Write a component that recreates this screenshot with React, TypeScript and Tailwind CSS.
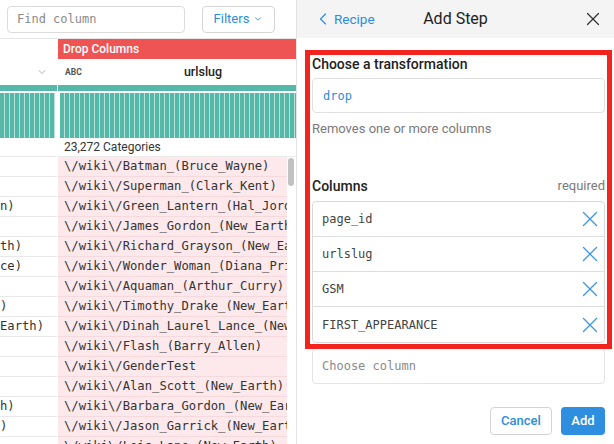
import { ChevronDown, ChevronLeft, X } from "lucide-react";

const rows = [
  { left: "", value: "\\/wiki\\/Batman_(Bruce_Wayne)" },
  { left: "", value: "\\/wiki\\/Superman_(Clark_Kent)" },
  { left: "n)", value: "\\/wiki\\/Green_Lantern_(Hal_Jordan)" },
  { left: "", value: "\\/wiki\\/James_Gordon_(New_Earth)" },
  { left: "th)", value: "\\/wiki\\/Richard_Grayson_(New_Earth)" },
  { left: "ce)", value: "\\/wiki\\/Wonder_Woman_(Diana_Prince)" },
  { left: "", value: "\\/wiki\\/Aquaman_(Arthur_Curry)" },
  { left: ")", value: "\\/wiki\\/Timothy_Drake_(New_Earth)" },
  { left: "Earth)", value: "\\/wiki\\/Dinah_Laurel_Lance_(New_Earth)" },
  { left: "", value: "\\/wiki\\/Flash_(Barry_Allen)" },
  { left: "", value: "\\/wiki\\/GenderTest" },
  { left: "", value: "\\/wiki\\/Alan_Scott_(New_Earth)" },
  { left: "h)", value: "\\/wiki\\/Barbara_Gordon_(New_Earth)" },
  { left: ")", value: "\\/wiki\\/Jason_Garrick_(New_Earth)" },
  { left: "", value: "\\/wiki\\/Lois_Lane_(New_Earth)" },
];

const chosen = ["page_id", "urlslug", "GSM", "FIRST_APPEARANCE"];

const mono = "font-['DejaVu_Sans_Mono',monospace]";

function Bars({ count }: { count: number }) {
  return (
    <div className="flex h-full gap-px overflow-hidden bg-[#b6e2da]">
      {Array.from({ length: count }).map((_, i) => (
        <div key={i} className="h-full w-[4px] shrink-0 bg-[#56b8a8]" />
      ))}
    </div>
  );
}

function DataPanel() {
  return (
    <div className="flex w-[296px] shrink-0 flex-col overflow-hidden">
      <div className="flex h-[39px] shrink-0 items-center border-b border-[#e6e6e6] pl-[7px]">
        <div
          className={`flex h-[27px] w-[178px] items-center rounded border border-[#dcdcdc] pl-[9px] text-[12px] text-[#8a8a8a] ${mono}`}
        >
          Find column
        </div>
        <button
          type="button"
          className="ml-[17px] flex h-[27px] w-[73px] items-center justify-center gap-[4px] rounded border border-[#d6d6d6] text-[13px] text-[#2b8de0]"
        >
          Filters
          <ChevronDown size={10} strokeWidth={2} />
        </button>
      </div>

      <div className="grid grid-cols-[57px_238px] gap-x-px">
        <div className="h-[20px]" />
        <div className="flex h-[20px] items-center bg-[#ef5455] pl-[5px] text-[12px] font-medium text-white">
          Drop Columns
        </div>

        <div className="flex h-[26px] items-center justify-end pr-[9px] text-[#9a9a9a]">
          <ChevronDown size={12} strokeWidth={1.5} />
        </div>
        <div className="relative flex h-[26px] items-center justify-center pl-[52px]">
          <span className="absolute left-[7px] text-[8.5px] font-bold text-[#555]">ABC</span>
          <span className="text-[12.5px] font-medium text-[#222]">urlslug</span>
        </div>

        <div className="h-[6px] bg-[#56b8a8]" />
        <div className="h-[6px] bg-[#56b8a8]" />

        <div className="mt-[2px] h-[45px] pr-[2px]">
          <Bars count={11} />
        </div>
        <div className="mt-[2px] h-[45px] pl-[2px]">
          <Bars count={48} />
        </div>

        <div className="h-[19px] border-b border-[#e8e8e8]" />
        <div className="flex h-[19px] items-end border-b border-[#ececec] pl-[6px] text-[12px] leading-[18px] text-[#333]">
          23,272 Categories
        </div>
      </div>

      <div className="flex flex-1">
        <div className="w-[57px] shrink-0 overflow-hidden">
          {rows.map((row, i) => (
            <div
              key={i}
              className={`flex h-[20px] items-center border-b border-[#e9e9e9] whitespace-nowrap text-[12.2px] text-[#333] ${mono}`}
            >
              {row.left}
            </div>
          ))}
        </div>
        <div className="ml-px w-[229px] shrink-0 overflow-hidden">
          {rows.map((row, i) => (
            <div
              key={i}
              className={`flex h-[20px] items-center border-b border-[#f6d9dd] bg-[#fde9ec] pl-[6px] whitespace-nowrap text-[12.2px] text-[#333] ${mono}`}
            >
              {row.value}
            </div>
          ))}
        </div>
        <div className="w-[9px] shrink-0 pt-px pl-[1px]">
          <div className="h-[28px] w-[6px] rounded-full bg-[#c2c2c2]" />
        </div>
      </div>
    </div>
  );
}

function StepPanel() {
  return (
    <div className="flex flex-1 flex-col border-l border-[#e3e3e3]">
      <div className="relative flex h-[38px] shrink-0 items-center justify-center bg-[#f4f4f4]">
        <div className="absolute left-[16px] flex items-center text-[13.5px] text-[#2b8de0]">
          <ChevronLeft size={20} strokeWidth={1.4} />
          <span className="ml-[1px]">Recipe</span>
        </div>
        <span className="text-[16px] text-[#222]">Add Step</span>
        <X size={22} strokeWidth={1.3} className="absolute right-[10px] text-[#333]" />
      </div>

      <div className="flex flex-col pr-[9px] pl-[15px]">
        <div className="mt-[17px] text-[14px] leading-[18px] font-medium text-[#222]">
          Choose a transformation
        </div>
        <div
          className={`mt-[5px] flex h-[35px] items-center rounded border border-[#e1e1e1] pl-[10px] text-[12px] text-[#2b8de0] ${mono}`}
        >
          drop
        </div>
        <div className="mt-[7px] text-[13px] leading-[18px] text-[#7a7a7a]">
          Removes one or more columns
        </div>

        <div className="mt-[39px] flex items-center justify-between leading-[18px]">
          <span className="text-[14px] font-medium text-[#222]">Columns</span>
          <span className="text-[13px] text-[#7a7a7a]">required</span>
        </div>
        <div className="mt-[6px] rounded border border-[#d9d9d9]">
          {chosen.map((name, i) => (
            <div
              key={name}
              className={`flex h-[35px] items-center justify-between pr-[1px] pl-[9px] ${
                i < chosen.length - 1 ? "border-b border-[#dedede]" : ""
              }`}
            >
              <span className={`text-[12px] text-[#444] ${mono}`}>{name}</span>
              <X size={26} strokeWidth={1.2} className="text-[#3a95e4]" />
            </div>
          ))}
        </div>
        <div
          className={`mt-[5px] flex h-[36px] items-center rounded border border-[#e3e3e3] pl-[9px] text-[12px] text-[#8a8a8a] ${mono}`}
        >
          Choose column
        </div>

        <div className="mt-[23px] flex justify-end gap-[9px]">
          <button
            type="button"
            className="h-[28px] w-[62px] rounded border border-[#d3d3d3] text-[13px] font-medium text-[#2b8de0]"
          >
            Cancel
          </button>
          <button
            type="button"
            className="h-[28px] w-[44px] rounded bg-[#2e8ee0] text-[13px] font-medium text-white"
          >
            Add
          </button>
        </div>
      </div>
    </div>
  );
}

export default function App() {
  return (
    <div className="relative flex h-[444px] w-[614px] overflow-hidden bg-white font-['Roboto',sans-serif]">
      <DataPanel />
      <StepPanel />
      <div className="pointer-events-none absolute top-[50px] left-[305px] h-[299px] w-[307px] border-[5px] border-[#f3241d]" />
    </div>
  );
}
